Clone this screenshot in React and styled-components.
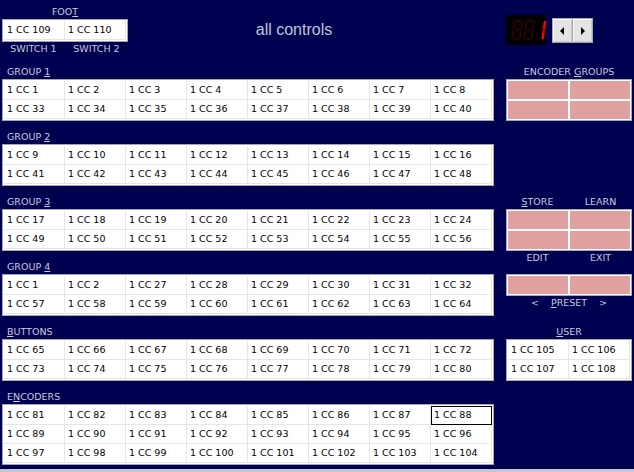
import React from "react";
import styled, { createGlobalStyle } from "styled-components";

const GlobalStyle = createGlobalStyle`
  html, body { margin: 0; padding: 0; background: #000050; }
  body { width: 634px; height: 472px; overflow: hidden; font-family: "DejaVu Sans", Verdana, sans-serif; font-size: 9.5px; }
`;

const Page = styled.div`
  position: relative;
  width: 634px;
  height: 472px;
  background: #000050;
  box-sizing: border-box;
  padding-left: 2px;
  border-bottom: 3px solid #c4c6d4;
`;

const TopBar = styled.div`
  display: flex;
  align-items: flex-start;
  height: 56px;
`;

const FootBlock = styled.div`
  width: 126px;
  display: flex;
  flex-direction: column;
`;

const FootTop = styled.div`
  color: #c8cadc;
  height: 19px;
  line-height: 14px;
  padding-top: 5px;
  box-sizing: border-box;
  text-align: center;
`;

const TwoLabels = styled.div`
  display: grid;
  grid-template-columns: 1fr 1fr;
  color: #c8cadc;
  line-height: 14px;
  height: ${(p) => p.$h || 14}px;
  margin-top: ${(p) => p.$mt || 0}px;
  text-align: center;
  align-items: ${(p) => (p.$bottom ? "end" : "start")};
`;

const Title = styled.div`
  width: 332px;
  text-align: center;
  font-family: "Liberation Sans", Arial, sans-serif;
  font-size: 16px;
  color: #bcc6da;
  padding-top: 20px;
  line-height: 20px;
`;

const Display = styled.div`
  margin-left: 46px;
  margin-top: 15px;
  width: 40px;
  height: 30px;
  background: #000;
  display: flex;
`;

const SpinBox = styled.div`
  margin-left: 6px;
  margin-top: 18px;
  display: flex;
  gap: 1px;
  background: #a8a8a8;
  border: 1px solid #a8a8a8;
`;

const SpinButton = styled.div`
  width: 19px;
  height: 23px;
  background: #e4e4e4;
  box-shadow: inset 1px 1px 0 #fafafa, inset -1px -1px 0 #c8c8c8;
  display: flex;
  align-items: center;
  justify-content: center;
`;

const Main = styled.div`
  display: flex;
  gap: 12px;
`;

const LeftCol = styled.div`
  width: 492px;
  display: flex;
  flex-direction: column;
`;

const RightCol = styled.div`
  width: 126px;
  display: flex;
  flex-direction: column;
`;

const SectionLabel = styled.div`
  height: 23px;
  display: flex;
  align-items: flex-end;
  justify-content: ${(p) => (p.$center ? "center" : "flex-start")};
  padding-left: ${(p) => (p.$center ? 0 : 5)}px;
  color: #c8cadc;
  line-height: 14px;
  white-space: pre;
`;

const Grid = styled.div`
  display: grid;
  grid-template-columns: repeat(${(p) => p.$cols}, 61px);
  background: #fff;
  border: 1px solid #a4a6b0;
  padding: 1px;
  width: fit-content;
`;

const Cell = styled.div`
  box-sizing: border-box;
  height: 19px;
  line-height: 18px;
  padding-left: 3px;
  color: #000;
  border-right: 1px solid #e6e6e6;
  border-bottom: 1px solid #e6e6e6;
  white-space: nowrap;
  outline: ${(p) => (p.$focus ? "1px solid #000" : "none")};
  outline-offset: -1px;
`;

const PadGrid = styled.div`
  display: grid;
  grid-template-columns: 1fr 1fr;
  gap: 2px;
  background: #fff;
  border: 1px solid #a4a6b0;
  padding: 1px;
`;

const Pad = styled.div`
  height: 18px;
  background: #e0a0a0;
`;

const PresetRow = styled.div`
  display: flex;
  justify-content: center;
  gap: 12px;
  color: #c8cadc;
  line-height: 14px;
  margin-bottom: 6px;
`;

const U = styled.span`
  text-decoration: underline;
  text-underline-offset: 1px;
`;

const range = (a, n) => Array.from({ length: n }, (_, i) => a + i);

const groups = [
  { label: <span>GROUP <U>1</U></span>, rows: [[1, 2, 3, 4, 5, 6, 7, 8], range(33, 8)] },
  { label: <span>GROUP <U>2</U></span>, rows: [range(9, 8), range(41, 8)] },
  { label: <span>GROUP <U>3</U></span>, rows: [range(17, 8), range(49, 8)] },
  { label: <span>GROUP <U>4</U></span>, rows: [[1, 2, 27, 28, 29, 30, 31, 32], range(57, 8)] },
  { label: <span><U>B</U>UTTONS</span>, rows: [range(65, 8), range(73, 8)] },
  { label: <span>E<U>N</U>CODERS</span>, rows: [range(81, 8), range(89, 8), range(97, 8)], focus: 88 },
];

function CCGrid({ rows, cols, focus }) {
  return (
    <Grid $cols={cols}>
      {rows.flat().map((n, i) => (
        <Cell key={i} $focus={n === focus}>1 CC {n}</Cell>
      ))}
    </Grid>
  );
}

function Digit({ x, on, lit }) {
  const c = (s) => (on.includes(s) ? lit : "#3a0000");
  return (
    <g transform={`translate(${x},5) skewX(-8)`}>
      <polygon points="1.5,0 7.5,0 6.5,1.5 2.5,1.5" fill={c("a")} />
      <polygon points="8,0.5 9,1.5 9,9 7.5,9.5 7.5,2" fill={c("b")} />
      <polygon points="9,10.5 9,18.5 8,19.5 7.5,18 7.5,10.5" fill={c("c")} />
      <polygon points="1.5,20 7.5,20 6.5,18.5 2.5,18.5" fill={c("d")} />
      <polygon points="0,10.5 1.5,10.5 1.5,18 0.5,19.5 0,18.5" fill={c("e")} />
      <polygon points="0,1.5 1,0.5 1.5,2 1.5,9.5 0,9" fill={c("f")} />
      <polygon points="1.5,10 2.5,9.2 6.5,9.2 7.5,10 6.5,10.8 2.5,10.8" fill={c("g")} />
    </g>
  );
}

function SevenSeg() {
  return (
    <svg width="40" height="30" viewBox="0 0 40 30">
      <Digit x={8} on={[]} lit="#ff0000" />
      <Digit x={20} on={[]} lit="#ff0000" />
      <g transform="translate(31,5) skewX(-8)">
        <polygon points="8,0.5 9.5,1.5 9.5,9.5 7,10 7,2" fill="#ff0000" />
        <polygon points="9.5,10.5 9.5,18.5 8,20 7,18 7,10.5" fill="#ff0000" />
      </g>
    </svg>
  );
}

const Arrow = ({ dir }) => (
  <svg width="6" height="8" viewBox="0 0 6 8">
    {dir === "left" ? <polygon points="4,0 4,8 0,4" fill="#000" /> : <polygon points="1,0 1,8 5,4" fill="#000" />}
  </svg>
);

export default function App() {
  return (
    <>
      <GlobalStyle />
      <Page>
        <TopBar>
          <FootBlock>
            <FootTop>FOO<U>T</U></FootTop>
            <CCGrid rows={[[109, 110]]} cols={2} />
            <TwoLabels>
              <span>SWITCH 1</span>
              <span>SWITCH 2</span>
            </TwoLabels>
          </FootBlock>
          <Title>all controls</Title>
          <Display>
            <SevenSeg />
          </Display>
          <SpinBox>
            <SpinButton><Arrow dir="left" /></SpinButton>
            <SpinButton><Arrow dir="right" /></SpinButton>
          </SpinBox>
        </TopBar>
        <Main>
          <LeftCol>
            {groups.map((g, i) => (
              <React.Fragment key={i}>
                <SectionLabel>{g.label}</SectionLabel>
                <CCGrid rows={g.rows} cols={8} focus={g.focus} />
              </React.Fragment>
            ))}
          </LeftCol>
          <RightCol>
            <SectionLabel $center>
              <span>ENCODER <U>G</U>ROUPS</span>
            </SectionLabel>
            <PadGrid>
              <Pad /><Pad /><Pad /><Pad />
            </PadGrid>
            <TwoLabels $h={23} $mt={65} $bottom>
              <span><U>S</U>TORE</span>
              <span>LEARN</span>
            </TwoLabels>
            <PadGrid>
              <Pad /><Pad /><Pad /><Pad />
            </PadGrid>
            <TwoLabels $h={23}>
              <span>EDIT</span>
              <span>EXIT</span>
            </TwoLabels>
            <PadGrid>
              <Pad /><Pad />
            </PadGrid>
            <PresetRow>
              <span>&lt;</span>
              <span><U>P</U>RESET</span>
              <span>&gt;</span>
            </PresetRow>
            <SectionLabel $center>
              <span><U>U</U>SER</span>
            </SectionLabel>
            <CCGrid rows={[[105, 106], [107, 108]]} cols={2} />
          </RightCol>
        </Main>
      </Page>
    </>
  );
}
